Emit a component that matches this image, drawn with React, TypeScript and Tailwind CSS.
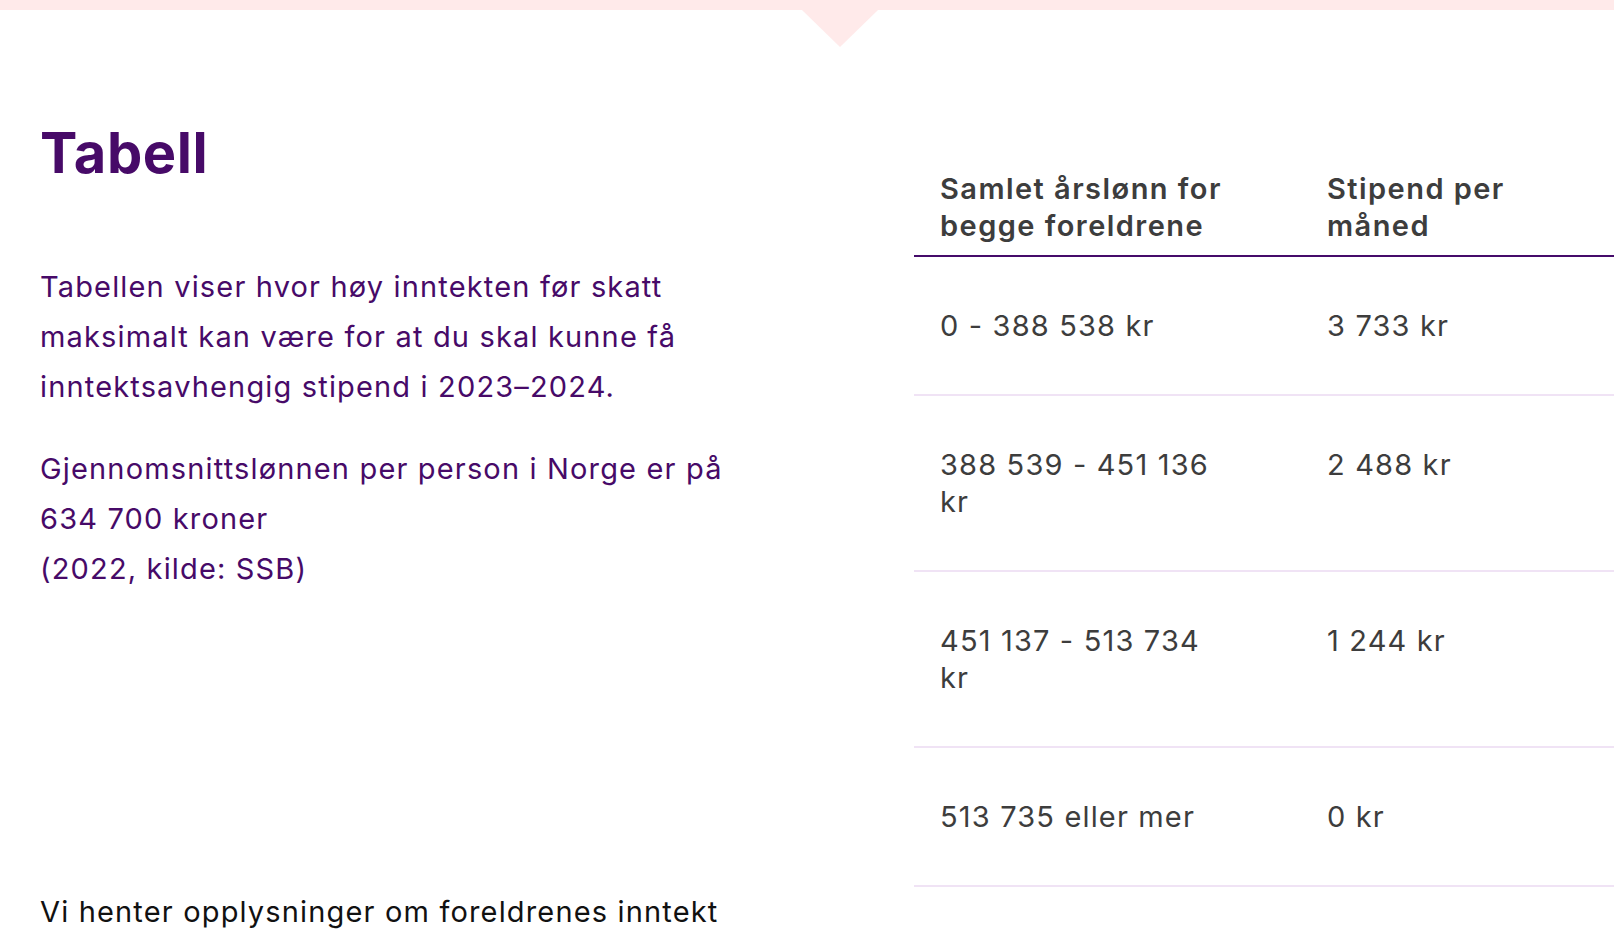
import React from "react";

const rows = [
  { income: "0 - 388 538 kr", grant: "3 733 kr" },
  { income: "388 539 - 451 136 kr", grant: "2 488 kr" },
  { income: "451 137 - 513 734 kr", grant: "1 244 kr" },
  { income: "513 735 eller mer", grant: "0 kr" },
];

export default function App() {
  return (
    <div className="min-h-screen bg-white overflow-hidden font-['Inter',sans-serif]">
      {/* Pink band with pointer */}
      <div className="relative h-[10px] bg-[#ffeaea]">
        <div className="absolute left-[802px] top-[10px] w-0 h-0 border-l-[38px] border-r-[38px] border-t-[37px] border-l-transparent border-r-transparent border-t-[#ffeaea]" />
      </div>

      <section className="pt-[110px] pl-10">
        <div className="flex items-start">
          {/* Left text column */}
          <div className="w-[715px] shrink-0 text-[#470a68]">
            <h2 className="text-[56px] leading-[67px] font-bold tracking-[0.01em]">Tabell</h2>
            <div className="mt-[75px] text-[29px] leading-[50px] tracking-[0.04em]">
              <p className="mb-8">
                Tabellen viser hvor høy inntekten før skatt maksimalt kan være
                for at du skal kunne få inntektsavhengig stipend i 2023–2024.
              </p>
              <p>
                Gjennomsnittslønnen per person i Norge er på 634 700 kroner
                <br />
                (2022, kilde: SSB)
              </p>
            </div>
          </div>

          {/* Table */}
          <div className="ml-[159px] mt-[50px] flex-1 text-[29px] leading-[37px] tracking-[0.04em] text-[#3d3d3d]">
            <div className="grid grid-cols-[387px_1fr] border-b-2 border-[#450b6a] pb-[11px] font-semibold tracking-[0.05em]">
              <div className="pl-[26px] max-w-[314px]">Samlet årslønn for begge foreldrene</div>
              <div className="pl-[26px] max-w-[220px]">Stipend per måned</div>
            </div>
            {rows.map((row) => (
              <div
                key={row.income}
                className="grid grid-cols-[387px_1fr] border-b-2 border-[#f0e3f5] py-[50px]"
              >
                <div className="pl-[26px] max-w-[314px]">{row.income}</div>
                <div className="pl-[26px]">{row.grant}</div>
              </div>
            ))}
          </div>
        </div>

        <p className="w-[715px] text-[29px] leading-[50px] tracking-[0.04em] text-[#111]">
          Vi henter opplysninger om foreldrenes inntekt fra Skatteetaten når du
          søker om stipend.
        </p>
      </section>
    </div>
  );
}
